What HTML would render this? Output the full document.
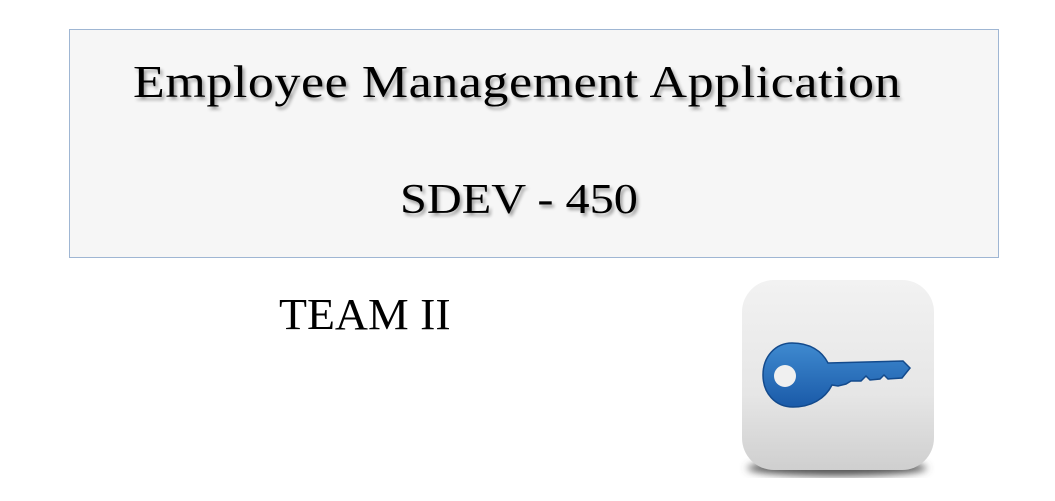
<!DOCTYPE html>
<html><head><style>
body{margin:0;width:1055px;height:501px;background:#fff;position:relative;overflow:hidden;font-family:"Liberation Serif",serif;}
.box{position:absolute;left:69px;top:29px;width:928px;height:227px;border:1px solid #9fb6d3;background:#f6f6f6;}
.t{position:absolute;white-space:nowrap;color:#000;text-shadow:2px 3px 3px rgba(0,0,0,.35);transform-origin:0 0;}
</style></head><body>
<div class="box"></div>
<div class="t" style="left:133px;top:55px;font-size:46px;letter-spacing:0.5px;transform:scaleX(1.13);">Employee Management Application</div>
<div class="t" style="left:400px;top:176px;font-size:42px;transform:scaleX(1.15);">SDEV - 450</div>
<div class="t" style="left:279px;top:289px;font-size:44px;text-shadow:none;transform:scaleX(1.04);">TEAM II</div>
<svg style="position:absolute;left:720px;top:270px" width="230" height="225" viewBox="0 0 230 225">
<defs>
<linearGradient id="g" x1="0" y1="0" x2="0" y2="1"><stop offset="0" stop-color="#f2f2f2"/><stop offset=".6" stop-color="#e6e6e6"/><stop offset="1" stop-color="#cfcfcf"/></linearGradient>
<linearGradient id="b" x1="0" y1="0" x2="0" y2="1"><stop offset="0" stop-color="#3f8ad0"/><stop offset="1" stop-color="#1a5aa8"/></linearGradient>
<filter id="s"><feGaussianBlur stdDeviation="4"/></filter>
</defs>
<ellipse cx="117" cy="198" rx="90" ry="8" fill="#555" filter="url(#s)"/>
<rect x="22" y="10" width="192" height="190" rx="32" fill="url(#g)"/>
<path d="M72 73 C90 73 102 81 108 93 L183 91 L190 98 L182 108 L168 109 L164 105 L160 109 L150 110 L146 106 L141 111 L131 111 L126 114 L118 116 L112 115 C105 129 91 137 73 137 C55 137 43 123 43 105 C43 87 55 73 72 73 Z" fill="url(#b)" stroke="#134a8c" stroke-width="1.5"/>
<circle cx="65" cy="106" r="11" fill="#f0f0f0"/>
</svg>
</body></html>
